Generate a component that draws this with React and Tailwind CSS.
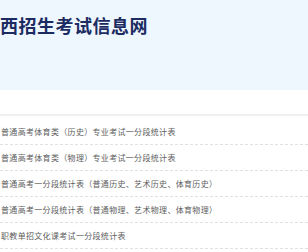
export default function App() {
  const rows = [
    "普通高考体育类（历史）专业考试一分段统计表",
    "普通高考体育类（物理）专业考试一分段统计表",
    "普通高考一分段统计表（普通历史、艺术历史、体育历史）",
    "普通高考一分段统计表（普通物理、艺术物理、体育物理）",
    "职教单招文化课考试一分段统计表",
  ];
  return (
    <div className="w-[308px] h-[252px] overflow-hidden bg-white" style={{ fontFamily: '"Noto Sans CJK SC", "Noto Sans", sans-serif' }}>
      <div className="h-[90px] bg-[#eef6fe] pt-[14px]">
        <div className="text-[18px] leading-[22px] font-bold text-[#1c2c62] tracking-[0.5px] whitespace-nowrap">
          西招生考试信息网
        </div>
      </div>
      <div className="h-[24px]" />
      <div className="h-[2px] bg-[#f0f0f0]" />
      <div className="pt-[3px]">
        {rows.map((r) => (
          <div key={r} className="h-[26px] flex items-center border-b border-dashed border-[#e0e0e0] text-[8px] text-[#606060] whitespace-nowrap tracking-[0.32px] pl-[1px]">
            {r}
          </div>
        ))}
      </div>
    </div>
  );
}
